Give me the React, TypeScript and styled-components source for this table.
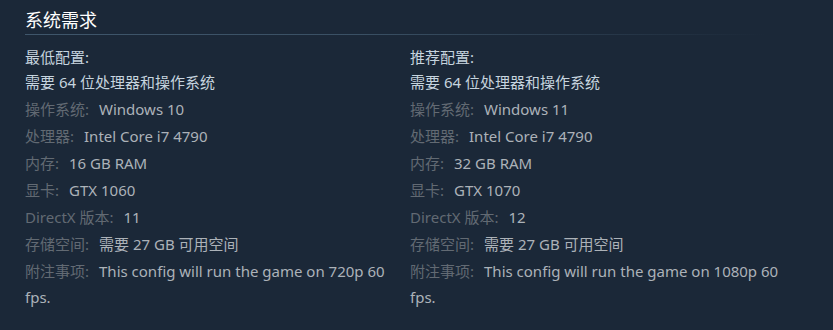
import React from "react";
import styled, { createGlobalStyle } from "styled-components";

const Global = createGlobalStyle`
  html, body { margin: 0; padding: 0; background: #1b2838; }
  body { width: 833px; height: 330px; overflow: hidden; }
`;

const Page = styled.div`
  box-sizing: border-box;
  width: 833px;
  height: 330px;
  padding: 5px 25px 0 25px;
  background: #1b2838;
  font-family: "Noto Sans", "Noto Sans CJK SC", sans-serif;
  font-size: 15px;
  color: #acb2b8;
`;

const Heading = styled.h2`
  margin: 0;
  padding: 0 0 6px 0;
  font-size: 18px;
  font-weight: 400;
  line-height: 28px;
  color: #ffffff;
  font-family: "Noto Sans CJK SC", sans-serif;
  &::after {
    content: "";
    display: block;
    height: 1px;
    margin-top: 1px;
    width: 740px;
    background: linear-gradient(to right, #3f566b 0%, #3a5064 45%, rgba(27, 40, 56, 0) 100%);
  }
`;

const Columns = styled.div`
  display: grid;
  grid-template-columns: 370px 375px;
  column-gap: 15px;
  margin-top: 3px;
`;

const Column = styled.div`
  display: flex;
  flex-direction: column;
`;

const ColTitle = styled.div`
  line-height: 26px;
  color: #c6d4df;
`;

const List = styled.ul`
  list-style: none;
  margin: 0;
  padding: 0;
`;

const Item = styled.li<{ $plain?: boolean }>`
  line-height: 25.5px;
  margin-bottom: 1.5px;
  color: ${(p) => (p.$plain ? "#c6d4df" : "#acb2b8")};
`;

const Label = styled.span`
  color: #626a73;
  margin-right: 10px;
`;

type Spec = { label: string; value: string };

const minimum: Spec[] = [
  { label: "操作系统:", value: "Windows 10" },
  { label: "处理器:", value: "Intel Core i7 4790" },
  { label: "内存:", value: "16 GB RAM" },
  { label: "显卡:", value: "GTX 1060" },
  { label: "DirectX 版本:", value: "11" },
  { label: "存储空间:", value: "需要 27 GB 可用空间" },
  { label: "附注事项:", value: "This config will run the game on 720p 60 fps." },
];

const recommended: Spec[] = [
  { label: "操作系统:", value: "Windows 11" },
  { label: "处理器:", value: "Intel Core i7 4790" },
  { label: "内存:", value: "32 GB RAM" },
  { label: "显卡:", value: "GTX 1070" },
  { label: "DirectX 版本:", value: "12" },
  { label: "存储空间:", value: "需要 27 GB 可用空间" },
  { label: "附注事项:", value: "This config will run the game on 1080p 60 fps." },
];

function ReqColumn({ title, specs }: { title: string; specs: Spec[] }) {
  return (
    <Column>
      <ColTitle>{title}</ColTitle>
      <List>
        <Item $plain>需要 64 位处理器和操作系统</Item>
        {specs.map((s) => (
          <Item key={s.label}>
            <Label>{s.label}</Label>
            {s.value}
          </Item>
        ))}
      </List>
    </Column>
  );
}

export default function App() {
  return (
    <>
      <Global />
      <Page>
        <Heading>系统需求</Heading>
        <Columns>
          <ReqColumn title="最低配置:" specs={minimum} />
          <ReqColumn title="推荐配置:" specs={recommended} />
        </Columns>
      </Page>
    </>
  );
}
